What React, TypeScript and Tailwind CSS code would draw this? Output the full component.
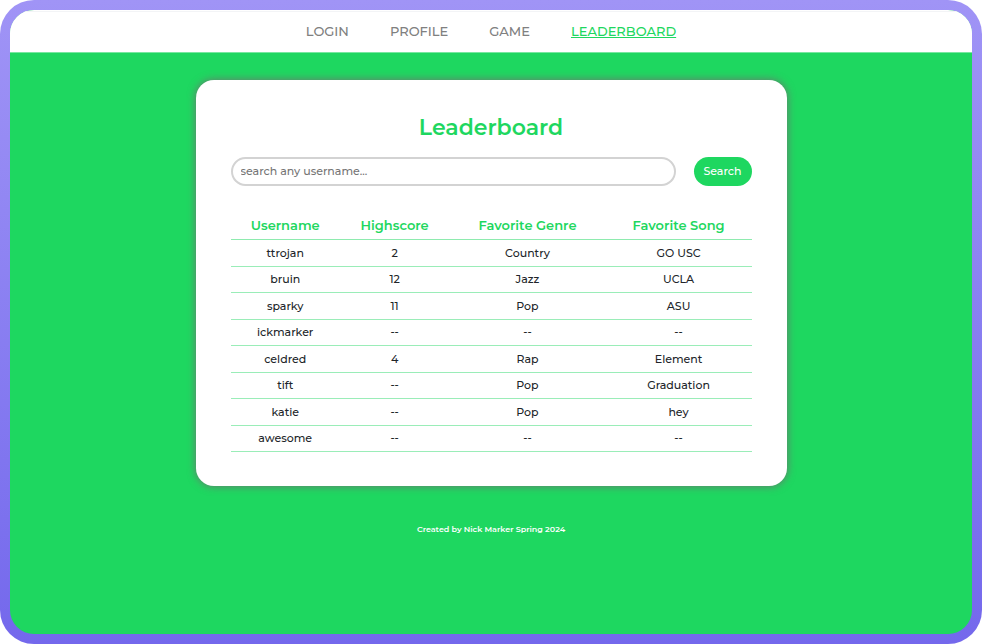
import React from "react";

type Player = {
  username: string;
  highscore: string;
  genre: string;
  song: string;
};

const links = [
  { label: "LOGIN", active: false },
  { label: "PROFILE", active: false },
  { label: "GAME", active: false },
  { label: "LEADERBOARD", active: true },
];

const players: Player[] = [
  { username: "ttrojan", highscore: "2", genre: "Country", song: "GO USC" },
  { username: "bruin", highscore: "12", genre: "Jazz", song: "UCLA" },
  { username: "sparky", highscore: "11", genre: "Pop", song: "ASU" },
  { username: "ickmarker", highscore: "--", genre: "--", song: "--" },
  { username: "celdred", highscore: "4", genre: "Rap", song: "Element" },
  { username: "tift", highscore: "--", genre: "Pop", song: "Graduation" },
  { username: "katie", highscore: "--", genre: "Pop", song: "hey" },
  { username: "awesome", highscore: "--", genre: "--", song: "--" },
];

function NavBar() {
  return (
    <nav className="mt-px flex h-[41px] items-center justify-center gap-[41px] border-t border-gray-100 bg-white text-[13px]">
      {links.map((link) => (
        <a
          key={link.label}
          href="#"
          className={link.active ? "text-[#1ed760] underline" : "text-[#808080]"}
        >
          {link.label}
        </a>
      ))}
    </nav>
  );
}

function SearchForm() {
  return (
    <form className="mt-[15px] flex gap-[18px]" onSubmit={(e) => e.preventDefault()}>
      <input
        type="text"
        aria-label="Username"
        placeholder="search any username..."
        className="h-[29px] min-w-0 flex-1 rounded-full border-2 border-[#d3d3d3] bg-white px-2 pb-0.5 text-[11px] text-[#222] outline-none placeholder:text-[#757575]"
      />
      <button type="submit" className="h-[29px] w-[58px] rounded-full bg-[#1ed760] text-[11px] text-white">
        Search
      </button>
    </form>
  );
}

function ScoreTable() {
  return (
    <table className="mt-[27px] w-full table-fixed border-separate border-spacing-0 text-center text-[11px] text-[#212529]">
      <thead>
        <tr className="h-[27px] text-[13px] text-[#1ed760]">
          <th className="w-[21%] border-b border-[#8eebaf] p-0 font-semibold">Username</th>
          <th className="w-[21%] border-b border-[#8eebaf] p-0 font-semibold">Highscore</th>
          <th className="w-[30%] border-b border-[#8eebaf] p-0 font-semibold">Favorite Genre</th>
          <th className="w-[28%] border-b border-[#8eebaf] p-0 font-semibold">Favorite Song</th>
        </tr>
      </thead>
      <tbody>
        {players.map((p) => (
          <tr key={p.username} className="h-[26px] odd:h-[27px]">
            <td className="border-b border-[#9aedb8] p-0">{p.username}</td>
            <td className="border-b border-[#9aedb8] p-0">{p.highscore}</td>
            <td className="border-b border-[#9aedb8] p-0">{p.genre}</td>
            <td className="border-b border-[#9aedb8] p-0">{p.song}</td>
          </tr>
        ))}
      </tbody>
    </table>
  );
}

export default function App() {
  return (
    <div className="bg-white">
      <div className="flex min-h-screen flex-col rounded-[34px] bg-linear-to-b from-[#a094f6] to-[#7468ec] p-[10px] font-['Montserrat','Inter',sans-serif] font-medium">
        <div className="flex flex-1 flex-col overflow-hidden rounded-[24px] bg-[#1ed760]">
          <header className="border-b border-[#78e7a0] bg-white">
            <NavBar />
          </header>
          <main className="px-4 pt-[27px]">
            <section className="mx-auto w-full max-w-[591px] rounded-[18px] bg-white px-[35px] py-[34px] shadow-[0_0_8px_#707070]">
              <h1 className="text-center text-[22px] leading-7 font-semibold text-[#1ed760]">Leaderboard</h1>
              <SearchForm />
              <ScoreTable />
            </section>
          </main>
          <footer className="py-9 text-center text-[8px] leading-[14px] font-semibold text-white">
            Created by Nick Marker Spring 2024
          </footer>
        </div>
      </div>
    </div>
  );
}
